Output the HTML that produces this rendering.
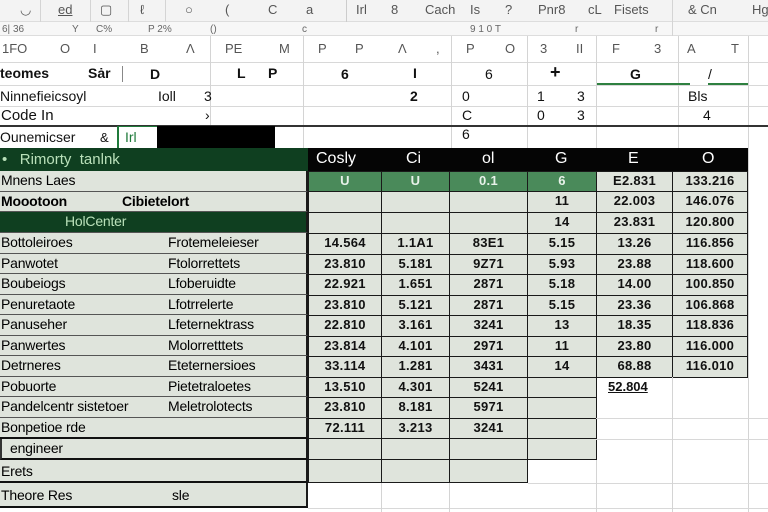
<!DOCTYPE html>
<html><head><meta charset="utf-8"><style>
*{margin:0;padding:0;box-sizing:border-box}
body{width:768px;height:512px;overflow:hidden;background:#fff;font-family:"Liberation Sans",sans-serif;position:relative;color:#111}
.a{position:absolute;white-space:nowrap}
.vl{position:absolute;width:1px;background:#d4d4d4}
.hl{position:absolute;height:1px;background:#d8d8d8}
.c{position:absolute;background:#dfe4dc;border:1.5px solid #1a1a1a;font-size:13px;font-weight:bold;text-align:center;line-height:18px;font-family:"Liberation Sans",sans-serif;letter-spacing:0.3px}
.g{background:#4a8a5a;color:#e8f2ea;font-family:"Liberation Sans",sans-serif}
.lb{position:absolute;left:0;width:308px;background:#dfe4dc;border-bottom:1.5px solid #555;border-right:2px solid #1a1a1a;font-size:14px;line-height:19px;padding-left:1px;color:#000;letter-spacing:-0.2px}
.lb span{position:absolute;left:168px}
.tb{font-size:13px;color:#555;top:2px}
.sm{font-size:10px;color:#666;top:24px}
.ch{font-size:13px;color:#555;top:41px}
</style></head><body>
<div class="a" style="left:0;top:0;width:768px;height:22px;background:#f3f3f3;border-bottom:1px solid #ddd"></div>
<div class="a" style="left:0;top:22px;width:768px;height:14px;background:#f7f7f7;border-bottom:1px solid #ddd"></div>
<div class="a tb" style="left:20px">◡</div><div class="a tb" style="left:58px;text-decoration:underline">ed</div>
<div class="a tb" style="left:100px">▢</div><div class="a tb" style="left:140px">ℓ</div>
<div class="a tb" style="left:185px">○</div><div class="a tb" style="left:225px">(</div>
<div class="a tb" style="left:268px">C</div><div class="a tb" style="left:306px">a</div>
<div class="a tb" style="left:356px">Irl</div><div class="a tb" style="left:391px">8</div>
<div class="a tb" style="left:425px">Cach</div><div class="a tb" style="left:470px">Is</div>
<div class="a tb" style="left:505px">?</div><div class="a tb" style="left:538px">Pnr8</div>
<div class="a tb" style="left:588px">cL</div><div class="a tb" style="left:614px">Fisets</div>
<div class="a tb" style="left:688px">& Cn</div><div class="a tb" style="left:752px">Hg</div>
<div class="vl" style="left:40px;top:0;height:22px"></div><div class="vl" style="left:90px;top:0;height:22px"></div>
<div class="vl" style="left:128px;top:0;height:22px"></div><div class="vl" style="left:165px;top:0;height:22px"></div>
<div class="vl" style="left:346px;top:0;height:22px;background:#ccc"></div><div class="vl" style="left:672px;top:0;height:36px"></div>
<div class="a sm" style="left:2px">6| 36</div><div class="a sm" style="left:72px">Y</div><div class="a sm" style="left:96px">C%</div>
<div class="a sm" style="left:148px">P 2%</div><div class="a sm" style="left:210px">()</div><div class="a sm" style="left:302px">c</div>
<div class="a sm" style="left:470px">9 1 0 T</div><div class="a sm" style="left:575px">r</div><div class="a sm" style="left:655px">r</div>
<div class="a ch" style="left:2px">1FO</div><div class="a ch" style="left:60px">O</div><div class="a ch" style="left:93px">I</div>
<div class="a ch" style="left:140px">B</div><div class="a ch" style="left:186px">Λ</div><div class="a ch" style="left:225px">PE</div>
<div class="a ch" style="left:279px">M</div><div class="a ch" style="left:318px">P</div><div class="a ch" style="left:355px">P</div>
<div class="a ch" style="left:398px">Λ</div><div class="a ch" style="left:436px">,</div><div class="a ch" style="left:466px">P</div>
<div class="a ch" style="left:505px">O</div><div class="a ch" style="left:540px">3</div><div class="a ch" style="left:576px">II</div>
<div class="a ch" style="left:612px">F</div><div class="a ch" style="left:654px">3</div><div class="a ch" style="left:687px">A</div>
<div class="a ch" style="left:731px">T</div>
<div class="hl" style="left:0;top:62px;width:768px"></div>
<div class="hl" style="left:0;top:85px;width:768px"></div>
<div class="hl" style="left:0;top:106px;width:768px"></div>
<div class="vl" style="left:210px;top:36px;height:112px"></div><div class="vl" style="left:303px;top:36px;height:112px"></div>
<div class="vl" style="left:451px;top:36px;height:112px"></div><div class="vl" style="left:527px;top:36px;height:112px"></div>
<div class="vl" style="left:596px;top:36px;height:112px"></div><div class="vl" style="left:678px;top:36px;height:112px"></div>
<div class="vl" style="left:748px;top:36px;height:476px"></div>
<div class="vl" style="left:122px;top:66px;height:16px;background:#888"></div>
<div class="a" style="left:0;top:65px;font-size:14px;font-weight:bold">teomes</div>
<div class="a" style="left:88px;top:65px;font-size:14px;font-weight:bold">Sȧr</div>
<div class="a" style="left:150px;top:66px;font-size:14px;font-weight:bold">D</div>
<div class="a" style="left:237px;top:65px;font-size:14px;font-weight:bold">L</div>
<div class="a" style="left:268px;top:65px;font-size:14px;font-weight:bold">P</div>
<div class="a" style="left:341px;top:66px;font-size:14px;font-weight:bold">6</div>
<div class="a" style="left:413px;top:65px;font-size:14px;font-weight:bold">I</div>
<div class="a" style="left:485px;top:66px;font-size:14px">6</div>
<div class="a" style="left:550px;top:62px;font-size:18px;font-weight:bold">+</div>
<div class="a" style="left:630px;top:66px;font-size:14px;font-weight:bold">G</div>
<div class="a" style="left:708px;top:66px;font-size:14px">/</div>
<div class="a" style="left:597px;top:83px;width:93px;height:2px;background:#2e8040"></div>
<div class="a" style="left:708px;top:83px;width:40px;height:2px;background:#2e8040"></div>
<div class="a" style="left:0;top:88px;font-size:14px">Ninnefieicsoyl</div>
<div class="a" style="left:158px;top:88px;font-size:14px">Ioll</div>
<div class="a" style="left:204px;top:88px;font-size:14px">3</div>
<div class="a" style="left:410px;top:88px;font-size:14px;font-weight:bold">2</div>
<div class="a" style="left:462px;top:88px;font-size:14px">0</div>
<div class="a" style="left:537px;top:88px;font-size:14px">1</div><div class="a" style="left:577px;top:88px;font-size:14px">3</div>
<div class="a" style="left:688px;top:88px;font-size:14px">Bls</div>
<div class="a" style="left:1px;top:107px;font-size:15px">Code In</div>
<div class="a" style="left:205px;top:107px;font-size:14px">›</div>
<div class="a" style="left:462px;top:107px;font-size:14px">C</div>
<div class="a" style="left:537px;top:107px;font-size:14px">0</div><div class="a" style="left:577px;top:107px;font-size:14px">3</div>
<div class="a" style="left:703px;top:107px;font-size:14px">4</div>
<div class="a" style="left:0;top:125px;width:768px;height:1.5px;background:#333"></div>
<div class="a" style="left:0;top:129px;font-size:14px">Ounemicser</div>
<div class="a" style="left:100px;top:130px;font-size:13px">&</div>
<div class="a" style="left:117px;top:126px;width:40px;height:22px;border-left:2px solid #1f7a3a;border-top:1px solid #1f7a3a;background:#fff;font-size:14px;color:#1f7a3a;padding-left:6px;line-height:20px">Irl</div>
<div class="a" style="left:157px;top:126px;width:118px;height:22px;background:#000"></div>
<div class="a" style="left:462px;top:126px;font-size:14px">6</div>
<div class="a" style="left:0;top:148px;width:308px;height:23px;background:#0f3f20;color:#b9e0b9;font-size:15px;line-height:23px;padding-left:2px">•&nbsp;&nbsp;&nbsp;Rimorty&nbsp;&nbsp;tanlnk</div>
<div class="a" style="left:308px;top:148px;width:440px;height:23px;background:#050505"></div>
<div class="a" style="left:316px;top:150px;color:#fff;font-size:16px">Cosly</div>
<div class="a" style="left:406px;top:150px;color:#fff;font-size:16px">Ci</div>
<div class="a" style="left:482px;top:150px;color:#fff;font-size:16px">ol</div>
<div class="a" style="left:555px;top:150px;color:#fff;font-size:16px">G</div>
<div class="a" style="left:628px;top:150px;color:#fff;font-size:16px">E</div>
<div class="a" style="left:702px;top:150px;color:#fff;font-size:16px">O</div>
<div class="lb" style="top:171px;height:21px">Mnens Laes</div>
<div class="lb" style="top:192px;height:20px;font-weight:bold">Moootoon<span style="left:122px">Cibietelort</span></div>
<div class="lb" style="top:212px;height:21px;background:#0f3f20;color:#b9e0b9;padding-left:65px">HolCenter</div>
<div class="lb" style="top:233px;height:21px">Bottoleiroes<span>Frotemeleieser</span></div>
<div class="lb" style="top:254px;height:20px">Panwotet<span>Ftolorrettets</span></div>
<div class="lb" style="top:274px;height:21px">Boubeiogs<span>Lfoberuidte</span></div>
<div class="lb" style="top:295px;height:20px">Penuretaote<span>Lfotrrelerte</span></div>
<div class="lb" style="top:315px;height:21px">Panuseher<span>Lfeternektrass</span></div>
<div class="lb" style="top:336px;height:20px">Panwertes<span>Molorretttets</span></div>
<div class="lb" style="top:356px;height:21px">Detrneres<span>Eteternersioes</span></div>
<div class="lb" style="top:377px;height:20px">Pobuorte<span>Pietetraloetes</span></div>
<div class="lb" style="top:397px;height:21px">Pandelcentr sistetoer<span>Meletrolotects</span></div>
<div class="lb" style="top:418px;height:21px;border-bottom:2px solid #111">Bonpetioe rde</div>
<div class="lb" style="top:439px;height:21px;padding-left:8px;border-left:2px solid #333;border-bottom:2px solid #111">engineer</div>
<div class="lb" style="top:460px;height:23px;line-height:23px;border-bottom:2px solid #111">Erets</div>
<div class="lb" style="top:483px;height:25px;line-height:25px;border-bottom:2px solid #111">Theore Res<span style="left:172px">sle</span></div>
<div class="c g" style="left:308px;top:171px;width:74px;height:21px">U</div>
<div class="c g" style="left:381px;top:171px;width:69px;height:21px">U</div>
<div class="c g" style="left:449px;top:171px;width:79px;height:21px">0.1</div>
<div class="c g" style="left:527px;top:171px;width:70px;height:21px">6</div>
<div class="c" style="left:596px;top:171px;width:77px;height:21px">E2.831</div>
<div class="c" style="left:672px;top:171px;width:76px;height:21px">133.216</div>
<div class="c" style="left:308px;top:191px;width:74px;height:22px"></div><div class="c" style="left:381px;top:191px;width:69px;height:22px"></div><div class="c" style="left:449px;top:191px;width:79px;height:22px"></div>
<div class="c" style="left:527px;top:191px;width:70px;height:22px">11</div><div class="c" style="left:596px;top:191px;width:77px;height:22px">22.003</div><div class="c" style="left:672px;top:191px;width:76px;height:22px">146.076</div>
<div class="c" style="left:308px;top:212px;width:74px;height:22px"></div><div class="c" style="left:381px;top:212px;width:69px;height:22px"></div><div class="c" style="left:449px;top:212px;width:79px;height:22px"></div>
<div class="c" style="left:527px;top:212px;width:70px;height:22px">14</div><div class="c" style="left:596px;top:212px;width:77px;height:22px">23.831</div><div class="c" style="left:672px;top:212px;width:76px;height:22px">120.800</div>
<div class="c" style="left:308px;top:233px;width:74px;height:22px">14.564</div><div class="c" style="left:381px;top:233px;width:69px;height:22px">1.1A1</div><div class="c" style="left:449px;top:233px;width:79px;height:22px">83E1</div><div class="c" style="left:527px;top:233px;width:70px;height:22px">5.15</div><div class="c" style="left:596px;top:233px;width:77px;height:22px">13.26</div><div class="c" style="left:672px;top:233px;width:76px;height:22px">116.856</div>
<div class="c" style="left:308px;top:254px;width:74px;height:21px">23.810</div><div class="c" style="left:381px;top:254px;width:69px;height:21px">5.181</div><div class="c" style="left:449px;top:254px;width:79px;height:21px">9Z71</div><div class="c" style="left:527px;top:254px;width:70px;height:21px">5.93</div><div class="c" style="left:596px;top:254px;width:77px;height:21px">23.88</div><div class="c" style="left:672px;top:254px;width:76px;height:21px">118.600</div>
<div class="c" style="left:308px;top:274px;width:74px;height:22px">22.921</div><div class="c" style="left:381px;top:274px;width:69px;height:22px">1.651</div><div class="c" style="left:449px;top:274px;width:79px;height:22px">2871</div><div class="c" style="left:527px;top:274px;width:70px;height:22px">5.18</div><div class="c" style="left:596px;top:274px;width:77px;height:22px">14.00</div><div class="c" style="left:672px;top:274px;width:76px;height:22px">100.850</div>
<div class="c" style="left:308px;top:295px;width:74px;height:21px">23.810</div><div class="c" style="left:381px;top:295px;width:69px;height:21px">5.121</div><div class="c" style="left:449px;top:295px;width:79px;height:21px">2871</div><div class="c" style="left:527px;top:295px;width:70px;height:21px">5.15</div><div class="c" style="left:596px;top:295px;width:77px;height:21px">23.36</div><div class="c" style="left:672px;top:295px;width:76px;height:21px">106.868</div>
<div class="c" style="left:308px;top:315px;width:74px;height:22px">22.810</div><div class="c" style="left:381px;top:315px;width:69px;height:22px">3.161</div><div class="c" style="left:449px;top:315px;width:79px;height:22px">3241</div><div class="c" style="left:527px;top:315px;width:70px;height:22px">13</div><div class="c" style="left:596px;top:315px;width:77px;height:22px">18.35</div><div class="c" style="left:672px;top:315px;width:76px;height:22px">118.836</div>
<div class="c" style="left:308px;top:336px;width:74px;height:21px">23.814</div><div class="c" style="left:381px;top:336px;width:69px;height:21px">4.101</div><div class="c" style="left:449px;top:336px;width:79px;height:21px">2971</div><div class="c" style="left:527px;top:336px;width:70px;height:21px">11</div><div class="c" style="left:596px;top:336px;width:77px;height:21px">23.80</div><div class="c" style="left:672px;top:336px;width:76px;height:21px">116.000</div>
<div class="c" style="left:308px;top:356px;width:74px;height:22px">33.114</div><div class="c" style="left:381px;top:356px;width:69px;height:22px">1.281</div><div class="c" style="left:449px;top:356px;width:79px;height:22px">3431</div><div class="c" style="left:527px;top:356px;width:70px;height:22px">14</div><div class="c" style="left:596px;top:356px;width:77px;height:22px">68.88</div><div class="c" style="left:672px;top:356px;width:76px;height:22px">116.010</div>
<div class="c" style="left:308px;top:377px;width:74px;height:21px">13.510</div><div class="c" style="left:381px;top:377px;width:69px;height:21px">4.301</div><div class="c" style="left:449px;top:377px;width:79px;height:21px">5241</div><div class="c" style="left:527px;top:377px;width:70px;height:21px"></div>
<div class="a" style="left:608px;top:379px;font-size:13px;font-weight:bold;text-decoration:underline">52.804</div>
<div class="c" style="left:308px;top:397px;width:74px;height:22px">23.810</div><div class="c" style="left:381px;top:397px;width:69px;height:22px">8.181</div><div class="c" style="left:449px;top:397px;width:79px;height:22px">5971</div><div class="c" style="left:527px;top:397px;width:70px;height:22px"></div>
<div class="c" style="left:308px;top:418px;width:74px;height:22px">72.111</div><div class="c" style="left:381px;top:418px;width:69px;height:22px">3.213</div><div class="c" style="left:449px;top:418px;width:79px;height:22px">3241</div><div class="c" style="left:527px;top:418px;width:70px;height:22px"></div>
<div class="c" style="left:308px;top:438px;width:74px;height:22px"></div><div class="c" style="left:381px;top:438px;width:69px;height:22px"></div><div class="c" style="left:449px;top:438px;width:79px;height:22px"></div><div class="c" style="left:527px;top:438px;width:70px;height:22px"></div>
<div class="c" style="left:308px;top:459px;width:74px;height:24px"></div><div class="c" style="left:381px;top:459px;width:69px;height:24px"></div><div class="c" style="left:449px;top:459px;width:79px;height:24px"></div>
<div class="hl" style="left:596px;top:418px;width:172px"></div><div class="hl" style="left:596px;top:439px;width:172px"></div>
<div class="hl" style="left:528px;top:483px;width:240px"></div><div class="hl" style="left:308px;top:508px;width:460px"></div>
<div class="vl" style="left:672px;top:377px;height:135px"></div><div class="vl" style="left:596px;top:460px;height:52px"></div>
<div class="vl" style="left:381px;top:483px;height:29px"></div><div class="vl" style="left:449px;top:483px;height:29px"></div>
</body></html>
